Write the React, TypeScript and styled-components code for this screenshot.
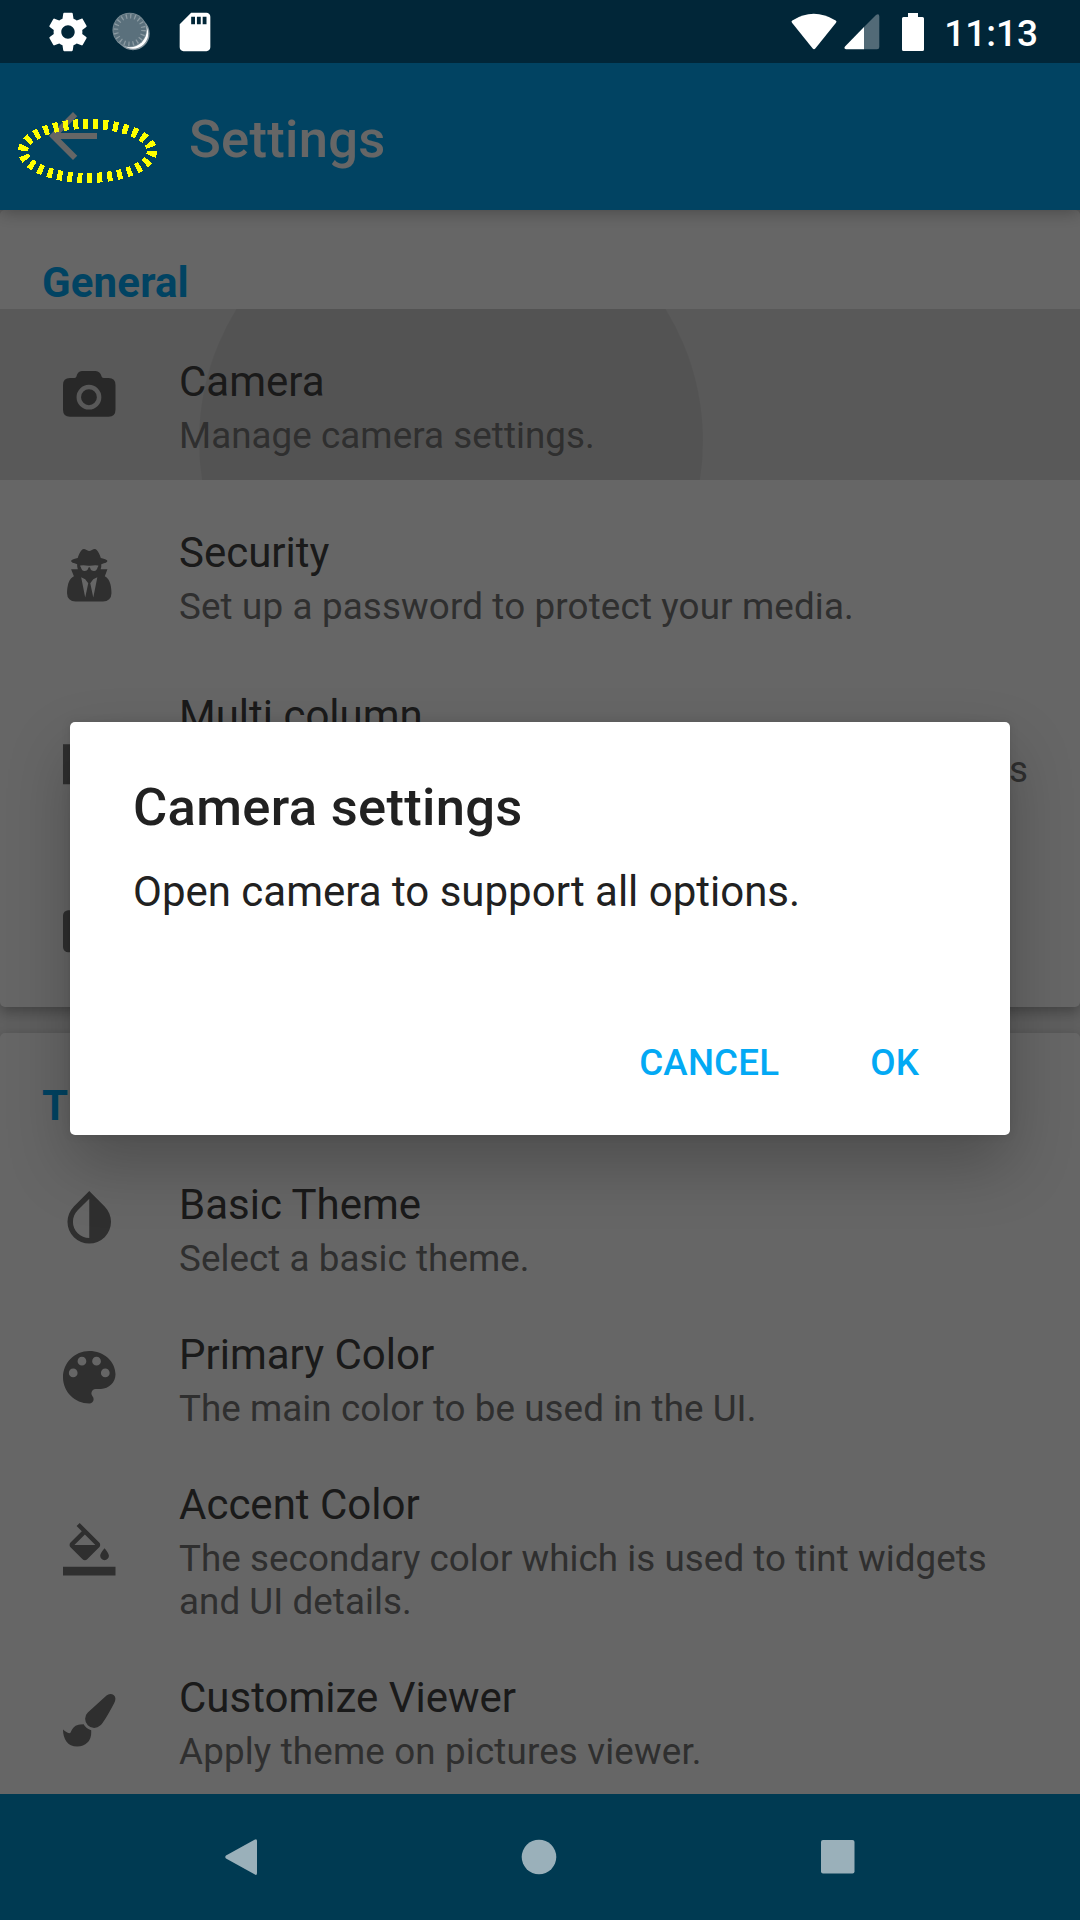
import React from "react";
import styled, { createGlobalStyle } from "styled-components";
import { MdArrowBack, MdSdCard } from "react-icons/md";

const GlobalStyle = createGlobalStyle`
  * { box-sizing: border-box; }
  body { margin: 0; background: #003a52; font-family: Roboto, "Noto Sans", sans-serif; }
`;

const Screen = styled.div`
  width: 1080px;
  height: 1920px;
  display: flex;
  flex-direction: column;
  overflow: hidden;
`;

const StatusBar = styled.header`
  height: 63px;
  flex: none;
  display: flex;
  justify-content: space-between;
  background: #012638;
  color: #fff;
  padding: 0 42px 0 45px;
`;

const StatusGroup = styled.div`
  display: flex;
  align-items: center;
  svg { display: block; flex: none; }
`;

const Clock = styled.span`
  font-size: 37px;
  font-weight: 500;
  line-height: 43px;
  margin-left: 20px;
  padding-top: 3px;
`;

const Window = styled.div`
  position: relative;
  height: 1731px;
  flex: none;
  display: flex;
  flex-direction: column;
  background: #eee;
  overflow: hidden;
`;

const Toolbar = styled.div`
  position: relative;
  z-index: 1;
  height: 147px;
  flex: none;
  display: flex;
  align-items: center;
  background: #03a9f4;
  color: #fff;
  padding-left: 37px;
  box-shadow: 0 2px 16px rgba(0, 0, 0, 0.3);
`;

const BackButton = styled.button`
  display: flex;
  border: 0;
  padding: 0;
  margin-top: -1px;
  background: none;
  color: inherit;
`;

const ToolbarTitle = styled.h1`
  margin: 4px 0 0 80px;
  font-size: 52.5px;
  font-weight: 500;
  line-height: 62px;
  letter-spacing: 0.28px;
`;

const Card = styled.section<{ $height: number }>`
  height: ${(p) => p.$height}px;
  flex: none;
  margin-bottom: 26px;
  background: #fff;
  border-radius: 5px;
  box-shadow: 0 5px 14px rgba(0, 0, 0, 0.3);
  overflow: hidden;
`;

const CardHeader = styled.h2`
  height: 99px;
  margin: 0;
  padding: 48px 0 0 42px;
  color: #03a9f4;
  font-size: 42px;
  font-weight: 700;
  line-height: 49px;
  letter-spacing: 0.15px;
`;

const Row = styled.div<{ $height: number; $top?: number }>`
  position: relative;
  height: ${(p) => p.$height}px;
  padding: ${(p) => p.$top ?? 48}px 52px 0 63px;
  display: flex;
  align-items: flex-start;
  overflow: hidden;
`;

const IconSlot = styled.div<{ $shift: number }>`
  width: 53px;
  height: 53px;
  flex: none;
  margin: ${(p) => p.$shift}px 63px 0 0;
  color: #757575;
  svg { display: block; width: 52.5px; height: 52.5px; }
`;

const RowText = styled.div<{ $end?: boolean; $tracking: number }>`
  position: relative;
  z-index: 1;
  flex: 1;
  h3 {
    margin: 0 0 8px;
    color: #424242;
    font-size: 42px;
    font-weight: 400;
    line-height: 49px;
  }
  p {
    margin: 0;
    color: #757575;
    font-size: 36.75px;
    line-height: 43px;
    letter-spacing: ${(p) => p.$tracking}px;
    text-align: ${(p) => (p.$end ? "right" : "left")};
  }
`;

const Pressed = styled.div`
  position: absolute;
  inset: 0;
  overflow: hidden;
  background: rgba(0, 0, 0, 0.13);
  &::after {
    content: "";
    position: absolute;
    left: 199px;
    top: -120px;
    width: 504px;
    height: 504px;
    border-radius: 50%;
    background: rgba(0, 0, 0, 0.06);
  }
`;

const Scrim = styled.div`
  position: absolute;
  inset: 0;
  z-index: 2;
  display: flex;
  flex-direction: column;
  align-items: center;
  padding-top: 659px;
  background: rgba(0, 0, 0, 0.6);
`;

const Dialog = styled.div`
  width: 940px;
  height: 413px;
  display: flex;
  flex-direction: column;
  padding: 54px 91px 0 63px;
  border-radius: 5px;
  background: #fff;
  color: #212121;
  box-shadow: 0 30px 64px rgba(0, 0, 0, 0.24), 0 0 10px rgba(0, 0, 0, 0.1);
  h2 { margin: 0; font-size: 52.5px; font-weight: 500; line-height: 62px; letter-spacing: 0.32px; }
  p { margin: 29px 0 0; font-size: 42px; line-height: 49px; }
`;

const Actions = styled.div`
  display: flex;
  justify-content: flex-end;
  gap: 91px;
  margin-top: 125px;
`;

const Action = styled.button`
  border: 0;
  padding: 0;
  background: none;
  color: #03a9f4;
  font: 500 36.75px/43px Roboto, sans-serif;
  letter-spacing: 0.15px;
`;

const FocusRing = styled.svg`
  position: absolute;
  left: 0;
  top: 40px;
  z-index: 3;
`;

const NavBar = styled.nav`
  height: 126px;
  flex: none;
  display: flex;
  justify-content: space-between;
  align-items: center;
  padding: 0 224px;
  background: #003a52;
  svg { display: block; }
`;

const GearIcon = () => (
  <svg width="46" height="46" viewBox="0 0 24 24" fill="currentColor">
    <path d="M19.430 12.980c.04-.32.07-.64.07-.98s-.03-.66-.07-.98l2.110-1.650c.19-.15.24-.42.12-.64l-2-3.460c-.12-.22-.39-.3-.61-.22l-2.490 1c-.52-.4-1.080-.73-1.690-.98l-.38-2.650C14.460 2.180 14.250 2 14 2h-4c-.25 0-.46.18-.49.42l-.38 2.650c-.61.25-1.170.59-1.690.98l-2.490-1c-.23-.09-.49 0-.61.22l-2 3.460c-.13.22-.07.49.12.64l2.110 1.650c-.04.32-.07.65-.07.98s.03.66.07.98l-2.110 1.650c-.19.15-.24.42-.12.64l2 3.460c.12.22.39.3.61.22l2.490-1c.52.4 1.080.73 1.690.98l.38 2.650c.03.24.24.42.49.42h4c.25 0 .46-.18.49-.42l.38-2.650c.61-.25 1.170-.59 1.690-.98l2.490 1c.23.09.49 0 .61-.22l2-3.460c.12-.22.07-.49-.12-.64l-2.110-1.650zM12 15.500c-1.930 0-3.500-1.570-3.500-3.500s1.570-3.500 3.500-3.500 3.500 1.570 3.500 3.500-1.570 3.500-3.500 3.500z" />
  </svg>
);

const CameraIcon = () => (
  <svg viewBox="0 0 53 53" fill="currentColor">
    <path fillRule="evenodd" d="M19 3h14c3 0 5 2.200 5.800 5.200.4 1.400 1 1.900 2.400 1.900H46q7 0 7 7v25q0 7-7 7H7q-7 0-7-7v-25q0-7 7-7h4.600c1.200 0 1.700-.5 2.100-1.900.8-3 2.300-5.200 5.300-5.200zM26.200 17a12.500 12.500 0 1 0 0 25a12.500 12.500 0 1 0 0-25zM26.200 21.500a8 8 0 1 1 0 16a8 8 0 1 1 0-16z" />
  </svg>
);

const AgentIcon = () => (
  <svg viewBox="0 0 1408 1664" fill="currentColor">
    <path fillRule="evenodd" d="M576 1536l96-448-96-128-128-64zM832 1536l128-640-128 64-96 128zM992 526q-2-4-4-6-10-8-96-8-70 0-167 19-7 2-21 2t-21-2q-97-19-167-19-86 0-96 8-2 2-4 6 2 18 4 27 2 3 7.500 6.500t7.500 10.500q2 4 7.500 20.500t7 20.500 7.500 17 8.500 17 9 14 12 13.500 14 9.500 17.500 8 20.500 4 24.500 2q36 0 59-12.500t32.500-30 14.500-34.500 11.500-29.500 17.500-12.500h12q11 0 17.500 12.500t11.500 29.500 14.500 34.500 32.500 30 59 12.500q13 0 24.500-2t20.500-4 17.500-8 14-9.500 12-13.500 9-14 8.500-17 7.500-17 7-20.500 7.500-20.500q2-7 7.500-10.500t7.500-6.500q2-9 4-27zM1408 1405q0 121-73 190t-194 69h-874q-121 0-194-69t-73-190q0-61 4.500-118t19-125.500 37.500-123.500 63.500-103.500 93.500-74.500l-90-220h214q-22-64-22-128 0-12 2-32-194-40-194-96 0-57 210-99 17-62 51.500-134t70.500-114q32-37 76-37 30 0 84 31t84 31 84-31 84-31q44 0 76 37 36 42 70.500 114t51.500 134q210 42 210 99 0 56-194 96 7 81-20 160h214l-82 225q63 33 107.500 96.500t65.500 143.500 29 151.500 8 157.500z" />
  </svg>
);

const ColumnsIcon = () => (
  <svg viewBox="4 3 17 17" fill="currentColor">
    <path d="M10 18h5V5h-5v13zm-6 0h5V5H4v13zM16 5v13h5V5h-5z" />
  </svg>
);

const PanelIcon = () => (
  <svg viewBox="2 2 20 20" fill="currentColor">
    <rect x="2" y="4" width="20" height="16" rx="2" />
  </svg>
);

const DropIcon = () => (
  <svg viewBox="2.340 2.270 19.310 19.310" fill="currentColor">
    <path d="M17.660 7.930L12 2.270 6.340 7.930c-3.120 3.120-3.120 8.190 0 11.310C7.900 20.800 9.950 21.580 12 21.580c2.050 0 4.100-.78 5.660-2.340 3.120-3.120 3.120-8.190 0-11.310zM12 19.590c-1.600 0-3.110-.62-4.240-1.760C6.620 16.690 6 15.190 6 13.590s.62-3.110 1.760-4.240L12 5.100v14.490z" />
  </svg>
);

const PaletteIcon = () => (
  <svg viewBox="3 3 18 18" fill="currentColor">
    <path d="M12 3c-4.970 0-9 4.030-9 9s4.030 9 9 9c.83 0 1.500-.67 1.500-1.500 0-.39-.15-.74-.39-1.010-.23-.26-.38-.61-.38-.99 0-.83.67-1.500 1.500-1.500H16c2.760 0 5-2.240 5-5 0-4.420-4.030-8-9-8zm-5.500 9c-.83 0-1.500-.67-1.500-1.500S5.670 9 6.500 9 8 9.670 8 10.500 7.330 12 6.500 12zm3-4C8.670 8 8 7.330 8 6.500S8.670 5 9.500 5s1.500.67 1.500 1.500S10.330 8 9.500 8zm5 0c-.83 0-1.500-.67-1.500-1.500S13.670 5 14.500 5s1.500.67 1.500 1.500S15.330 8 14.500 8zm3 4c-.83 0-1.500-.67-1.500-1.500S16.670 9 17.500 9s1.500.67 1.500 1.500-.67 1.500-1.500 1.500z" />
  </svg>
);

const FillIcon = () => (
  <svg viewBox="0 0 24 24" fill="currentColor">
    <path d="M16.560 8.940L7.620 0 6.210 1.410l2.380 2.380-5.150 5.150c-.59.59-.59 1.540 0 2.120l5.500 5.500c.29.29.68.44 1.060.44s.77-.15 1.060-.44l5.500-5.500c.59-.58.59-1.530 0-2.120zM5.210 10L10 5.210 14.790 10H5.210zM19 11.500s-2 2.170-2 3.500c0 1.100.9 2 2 2s2-.9 2-2c0-1.330-2-3.500-2-3.500zM0 20h24v4H0v-4z" />
  </svg>
);

const BrushIcon = () => (
  <svg viewBox="0 0 1792 1792" fill="currentColor">
    <path d="M1615 0q70 0 122.500 46.500t52.500 116.500q0 63-45 151-332 629-465 752-97 91-218 91-126 0-216.500-92.500t-90.500-219.500q0-128 92-212l638-579q59-54 130-54zM706 1034q39 76 106.500 130t150.500 76l1 71q4 213-129.500 347t-348.500 134q-123 0-218-46.500t-152.500-127.500-86.500-183-29-220q7 5 41 30t62 44.500 59 36.500 46 17q41 0 55-37 25-66 57.500-112.500t69.500-76 88-47.500 103-25.500 125-10.500z" />
  </svg>
);

const SyncIcon = () => (
  <svg width="40" height="40" viewBox="0 0 40 40">
    <circle cx="21" cy="21.600" r="15.900" fill="#fff" stroke="#83939c" strokeWidth="1.500" />
    <circle cx="17.700" cy="18" r="17.200" fill="#7c8e97" />
    <circle cx="17.700" cy="18" r="16.400" fill="#5a707c" />
    <circle cx="17.700" cy="18" r="13.800" fill="none" stroke="#8b9aa2" strokeWidth="4.600" strokeDasharray="1.300 3.035" />
  </svg>
);

const WifiIcon = () => (
  <svg width="46" height="38" viewBox="0 0 46 38">
    <path d="M1.300 7.400Q22.500-5.800 44.700 7.400Q46 8.300 45 9.800L24.500 35.300Q23 37 21.500 35.300L1 9.800Q0 8.300 1.300 7.400Z" fill="#fff" />
  </svg>
);

const SignalIcon = () => (
  <svg width="36" height="36" viewBox="0 0 36 36">
    <path d="M20 13L32 1Q35.300-.8 35.300 2.500V33Q35.300 35.300 33 35.300H20Z" fill="#526a77" />
    <path d="M20 13V35.300H2Q-.5 35 1 32.500Z" fill="#fff" />
  </svg>
);

const BatteryIcon = () => (
  <svg width="22" height="38" viewBox="0 0 22 38">
    <path d="M6 0H16V4H20.500Q22 4 22 5.500V36.500Q22 38 20.500 38H1.500Q0 38 0 36.500V5.500Q0 4 1.500 4H6Z" fill="#fff" />
  </svg>
);

const Gap = styled.i<{ $w: number }>`
  width: ${(p) => p.$w}px;
`;

type Item = {
  title: string;
  text: string;
  icon: React.ReactNode;
  height: number;
  shift: number;
  top?: number;
  tracking?: number;
  pressed?: boolean;
  end?: boolean;
};

const general: Item[] = [
  { title: "Camera", text: "Manage camera settings.", icon: <CameraIcon />, height: 171, shift: 11, pressed: true },
  { title: "Security", text: "Set up a password to protect your media.", icon: <AgentIcon />, height: 171, shift: 21, tracking: 0.15 },
  { title: "Multi column", text: "Set the number of columns for folders", icon: <ColumnsIcon />, height: 193, top: 40, shift: 47, end: true },
  { title: "", text: "", icon: <PanelIcon />, height: 163, shift: 13 },
];

const theme: Item[] = [
  { title: "Basic Theme", text: "Select a basic theme.", icon: <DropIcon />, height: 150, shift: 11 },
  { title: "Primary Color", text: "The main color to be used in the UI.", icon: <PaletteIcon />, height: 150, shift: 21 },
  { title: "Accent Color", text: "The secondary color which is used to tint widgets and UI details.", icon: <FillIcon />, height: 193, shift: 43 },
  { title: "Customize Viewer", text: "Apply theme on pictures viewer.", icon: <BrushIcon />, height: 169, shift: 21, tracking: 0.16 },
];

const SettingRow = ({ item }: { item: Item }) => (
  <Row $height={item.height} $top={item.top}>
    <IconSlot $shift={item.shift}>{item.icon}</IconSlot>
    {item.title && (
      <RowText $end={item.end} $tracking={item.tracking ?? 0.06}>
        <h3>{item.title}</h3>
        <p>{item.text}</p>
      </RowText>
    )}
    {item.pressed && <Pressed />}
  </Row>
);

export default function App() {
  return (
    <Screen>
      <GlobalStyle />
      <StatusBar>
        <StatusGroup>
          <GearIcon />
          <Gap $w={21} />
          <SyncIcon />
          <Gap $w={19.5} />
          <MdSdCard size={46} />
        </StatusGroup>
        <StatusGroup>
          <WifiIcon />
          <Gap $w={7} />
          <SignalIcon />
          <Gap $w={22} />
          <BatteryIcon />
          <Clock>11:13</Clock>
        </StatusGroup>
      </StatusBar>
      <Window>
        <Toolbar>
          <BackButton aria-label="Back"><MdArrowBack size={72} /></BackButton>
          <ToolbarTitle>Settings</ToolbarTitle>
        </Toolbar>
        <Card $height={797}>
          <CardHeader>General</CardHeader>
          {general.map((item, i) => <SettingRow key={i} item={item} />)}
        </Card>
        <Card $height={780}>
          <CardHeader>Theme</CardHeader>
          {theme.map((item) => <SettingRow key={item.title} item={item} />)}
        </Card>
        <Scrim>
          <Dialog role="dialog">
            <h2>Camera settings</h2>
            <p>Open camera to support all options.</p>
            <Actions>
              <Action>CANCEL</Action>
              <Action>OK</Action>
            </Actions>
          </Dialog>
        </Scrim>
        <FocusRing width="180" height="100" viewBox="0 0 180 100">
          <ellipse cx="87.500" cy="48" rx="64.500" ry="27" fill="none" stroke="#ff0" strokeWidth="10" strokeDasharray="5 5" shapeRendering="crispEdges" />
        </FocusRing>
      </Window>
      <NavBar>
        <svg width="34" height="38" viewBox="0 0 34 38"><path d="M30.500 1.700Q33 .2 33 3V35Q33 38 30.500 36.300L2 20.500Q.5 19 2 17.500Z" fill="#9ab0ba" /></svg>
        <svg width="36" height="36" viewBox="0 0 36 36"><circle cx="18" cy="18" r="17.300" fill="#9ab0ba" /></svg>
        <svg width="36" height="36" viewBox="0 0 36 36"><rect x="1" y="1" width="33.500" height="33.500" rx="2" fill="#9ab0ba" /></svg>
      </NavBar>
    </Screen>
  );
}
